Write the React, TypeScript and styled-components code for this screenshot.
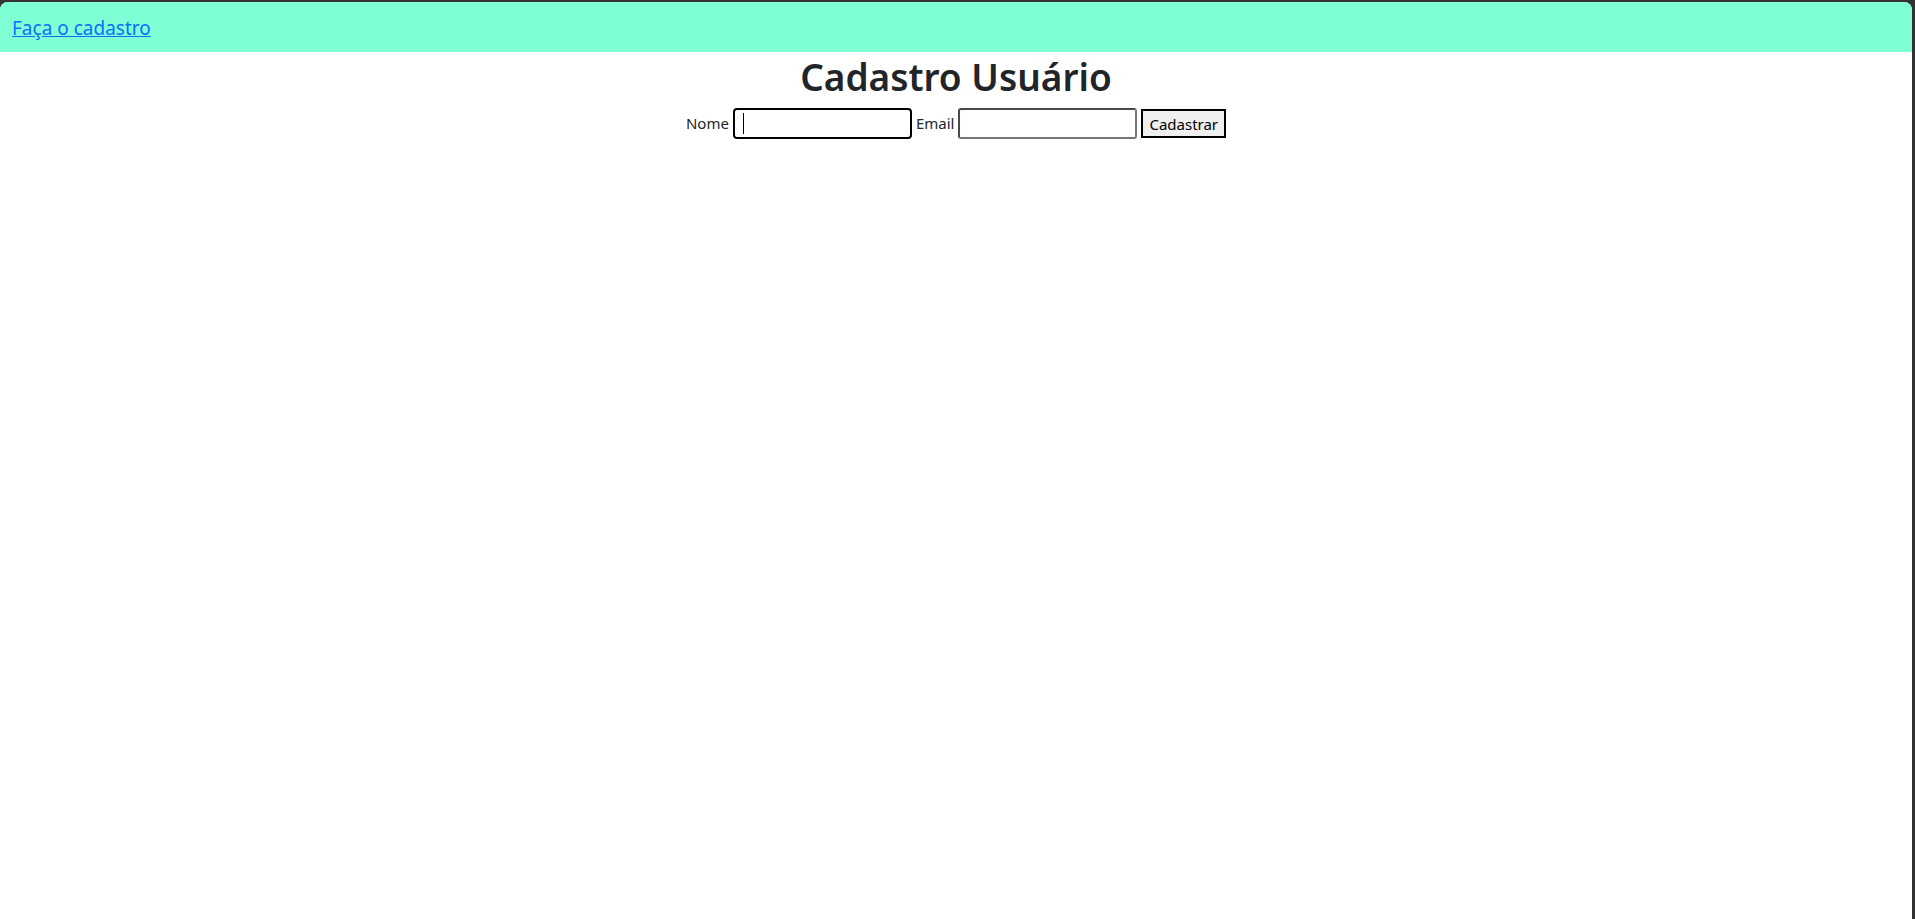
import React from 'react';
import styled, { createGlobalStyle } from 'styled-components';

const colors = {
  frame: '#333333',
  nav: '#7fffd4',
  link: '#0d6efd',
  text: '#212529',
  white: '#ffffff',
  inputBorder: '#767676',
  buttonBg: '#efefef',
};

const GlobalStyle = createGlobalStyle`
  *, *::before, *::after {
    box-sizing: border-box;
  }

  html, body {
    margin: 0;
    height: 100%;
  }

  body {
    background-color: ${colors.frame};
    font-family: 'Noto Sans', 'Open Sans', sans-serif;
    font-size: 16px;
    line-height: 1.5;
    color: ${colors.text};
  }

  #root {
    height: 100%;
  }
`;

const Window = styled.div`
  height: calc(100% - 2px);
  margin: 2px 3px 0 0;
  background-color: ${colors.white};
  border-radius: 8px 8px 0 0;
  overflow: hidden;
`;

const NavBar = styled.nav`
  display: flex;
  align-items: center;
  height: 50px;
  padding: 2px 12px 0;
  background-color: ${colors.nav};
`;

const NavLink = styled.a`
  font-size: 19px;
  color: ${colors.link};
  text-decoration: underline;
  cursor: pointer;
`;

const Main = styled.main`
  text-align: center;
`;

const Title = styled.h1`
  margin: 0 0 8px 0;
  padding-top: 1px;
  height: 48px;
  font-size: 37px;
  font-weight: 600;
  line-height: 48px;
  color: ${colors.text};
`;

const Form = styled.form`
  display: flex;
  justify-content: center;
  align-items: center;
  gap: 4px;
`;

const Label = styled.label`
  font-size: 15px;
`;

const InputWrapper = styled.span`
  position: relative;
  display: inline-flex;
`;

interface IInput {
  focused?: boolean;
}

const TextInput = styled.input<IInput>`
  width: 179px;
  height: 31px;
  padding: 1px 2px;
  font: inherit;
  background-color: ${colors.white};
  border: 2px solid ${colors.inputBorder};
  border-top-color: #4a4a4a;
  border-left-color: #4a4a4a;
  border-radius: 3px;
  outline: none;

  ${({ focused }) =>
    focused &&
    `
      border-color: #000000;
      border-radius: 4px;
    `}
`;

const Caret = styled.span`
  position: absolute;
  left: 10px;
  top: 5px;
  width: 1px;
  height: 21px;
  background-color: #000000;
`;

const SubmitButton = styled.button`
  height: 29px;
  padding: 0 6px;
  font-family: inherit;
  font-size: 15px;
  color: #000000;
  background-color: ${colors.buttonBg};
  border: 2px solid #000000;
  border-radius: 0;
`;

export default function App() {
  return (
    <>
      <GlobalStyle />
      <Window>
        <NavBar>
          <NavLink href="#">Faça o cadastro</NavLink>
        </NavBar>
        <Main>
          <Title>Cadastro Usuário</Title>
          <Form onSubmit={(e) => e.preventDefault()}>
            <Label htmlFor="nome">Nome</Label>
            <InputWrapper>
              <TextInput id="nome" type="text" focused />
              <Caret />
            </InputWrapper>
            <Label htmlFor="email">Email</Label>
            <TextInput id="email" type="email" />
            <SubmitButton type="submit">Cadastrar</SubmitButton>
          </Form>
        </Main>
      </Window>
    </>
  );
}
